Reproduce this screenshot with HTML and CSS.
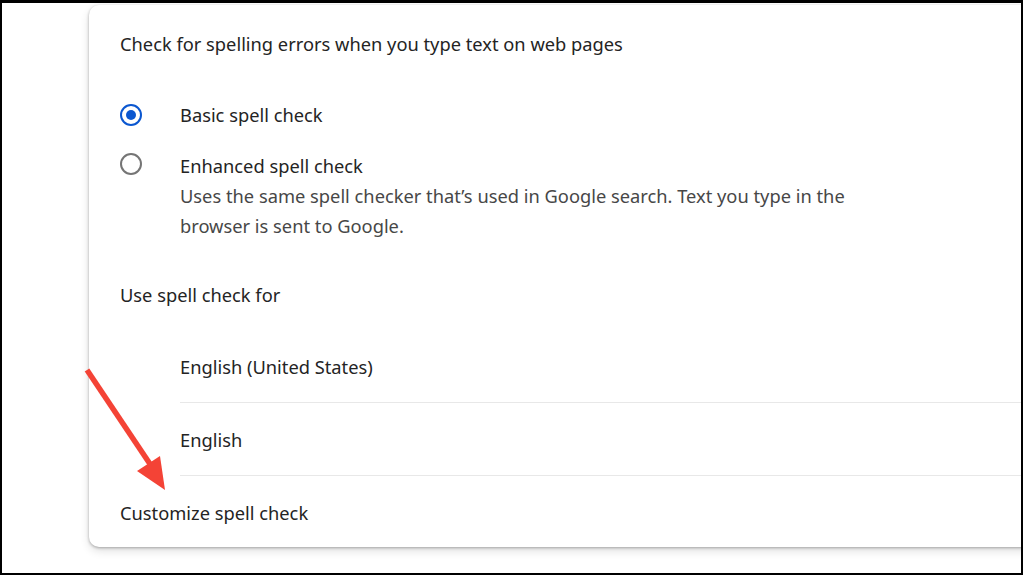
FILE: index.html
```html
<!DOCTYPE html>
<html>
<head>
<meta charset="utf-8">
<link rel="stylesheet" href="styles.css">
</head>
<body>
<div class="frame">
  <div class="card">
    <div class="heading">Check for spelling errors when you type text on web pages</div>
    <div class="option basic">
      <span class="radio checked"></span>
      <div class="opt-text">
        <div class="label">Basic spell check</div>
      </div>
    </div>
    <div class="option enhanced">
      <span class="radio"></span>
      <div class="opt-text">
        <div class="label">Enhanced spell check</div>
        <div class="desc">Uses the same spell checker that’s used in Google search. Text you type in the browser is sent to Google.</div>
      </div>
    </div>
    <div class="section-title">Use spell check for</div>
    <div class="lang-list">
      <div class="lang">English (United States)</div>
      <div class="lang">English</div>
    </div>
    <div class="customize">Customize spell check</div>
  </div>
  <svg class="arrow" width="120" height="160" viewBox="0 0 120 160">
    <line x1="4" y1="7" x2="67" y2="101" stroke="#f44336" stroke-width="5.5" stroke-linecap="butt"/>
    <polygon points="82,127 54,108 77,93" fill="#f44336"/>
  </svg>
</div>
</body>
</html>
```

FILE: styles.css
```css
* { box-sizing: border-box; }
html, body { margin: 0; padding: 0; background: #fff; }
.frame {
  position: relative;
  width: 1023px;
  height: 575px;
  border-style: solid;
  border-color: #000;
  border-width: 3px 2px 2px 2px;
  background: #fff;
  overflow: hidden;
  padding: 2px 0 0 87px;
  font-family: "Noto Sans", "Open Sans", sans-serif;
  color: #242424;
}
.card {
  width: 960px;
  height: 542px;
  background: #fff;
  border-radius: 10px;
  box-shadow: 0 1px 3px rgba(0,0,0,0.3), 0 4px 10px rgba(0,0,0,0.12);
  padding: 24px 0 0 31px;
  display: flex;
  flex-direction: column;
}
.heading { font-size: 18.3px; line-height: 30px; }
.option { display: flex; align-items: flex-start; gap: 38px; font-size: 18.3px; line-height: 30px; }
.basic { margin-top: 41px; }
.enhanced { margin-top: 21px; }
.radio {
  width: 22px; height: 22px; border-radius: 50%;
  border: 2px solid #757575;
  margin-top: 4px;
  flex: none;
  display: flex; align-items: center; justify-content: center;
}
.enhanced .radio { margin-top: 2px; }
.radio.checked { border-color: #0b57d0; }
.radio.checked::after {
  content: ""; width: 10px; height: 10px; border-radius: 50%; background: #0b57d0;
}
.desc { color: #474747; width: 700px; }
.section-title { margin-top: 39px; font-size: 18.3px; line-height: 30px; }
.lang-list { margin-top: 20px; padding-left: 60px; }
.lang {
  height: 73px;
  border-bottom: 1px solid #e8e8e8;
  display: flex; align-items: center;
  font-size: 18.3px;
}
.customize { height: 70px; padding-top: 2px; display: flex; align-items: center; font-size: 18.3px; }
.arrow { position: absolute; left: 81px; top: 360px; }
```
